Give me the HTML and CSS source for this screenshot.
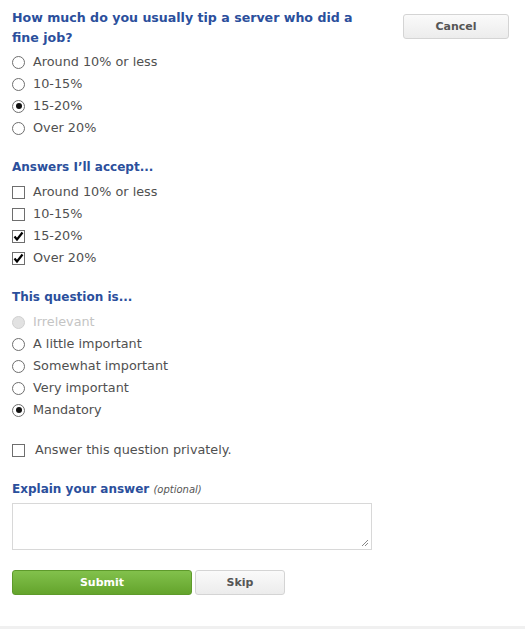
FILE: index.html
```html
<!DOCTYPE html>
<html>
<head>
<meta charset="utf-8">
<link rel="stylesheet" href="styles.css">
</head>
<body>
<div class="page">
  <div class="top">
    <h2 class="title">How much do you usually tip a server who did a fine job?</h2>
    <button class="btn btn-gray cancel">Cancel</button>
  </div>
  <ul class="opts first">
    <li><span class="radio"></span>Around 10% or less</li>
    <li><span class="radio"></span>10-15%</li>
    <li><span class="radio on"></span>15-20%</li>
    <li><span class="radio"></span>Over 20%</li>
  </ul>

  <h3 class="head">Answers I’ll accept...</h3>
  <ul class="opts">
    <li><span class="check"></span>Around 10% or less</li>
    <li><span class="check"></span>10-15%</li>
    <li><span class="check on"><svg viewBox="0 0 13 13" width="13" height="13"><path d="M2.5 6.5 L5 9.5 L10.5 2.5" fill="none" stroke="#000" stroke-width="2.2"/></svg></span>15-20%</li>
    <li><span class="check on"><svg viewBox="0 0 13 13" width="13" height="13"><path d="M2.5 6.5 L5 9.5 L10.5 2.5" fill="none" stroke="#000" stroke-width="2.2"/></svg></span>Over 20%</li>
  </ul>

  <h3 class="head">This question is...</h3>
  <ul class="opts">
    <li class="disabled"><span class="radio dis"></span>Irrelevant</li>
    <li><span class="radio"></span>A little important</li>
    <li><span class="radio"></span>Somewhat important</li>
    <li><span class="radio"></span>Very important</li>
    <li><span class="radio on"></span>Mandatory</li>
  </ul>

  <div class="private"><span class="check"></span>Answer this question privately.</div>

  <h3 class="head">Explain your answer <span class="optional">(optional)</span></h3>
  <div class="ta"><svg class="grip" width="8" height="8" viewBox="0 0 8 8"><path d="M7 1 L1 7 M7 4 L4 7" stroke="#888" stroke-width="1"/></svg></div>

  <div class="actions">
    <button class="btn btn-green submit">Submit</button>
    <button class="btn btn-gray skip">Skip</button>
  </div>
</div>
<div class="footer"></div>
</body>
</html>
```
FILE: styles.css
```css
* { box-sizing: border-box; }
html, body { margin: 0; padding: 0; background: #fff; }
body {
  font-family: "DejaVu Sans", Verdana, sans-serif;
  font-size: 12.8px;
  color: #505050;
  height: 629px;
  display: flex;
  flex-direction: column;
}
.page {
  padding: 8px 16px 0 12px;
  flex: 1;
}
.top {
  display: flex;
  justify-content: space-between;
  align-items: flex-start;
}
.title {
  margin: 0;
  width: 360px;
  font-size: 12.6px;
  line-height: 20px;
  font-weight: bold;
  color: #2b4f9c;
}
.btn {
  font-family: "DejaVu Sans", Verdana, sans-serif;
  font-size: 11px;
  font-weight: bold;
  height: 25px;
  border-radius: 3px;
  cursor: pointer;
  padding: 0;
}
.btn-gray {
  background: linear-gradient(#fafafa, #ececec);
  border: 1px solid #d4d4d4;
  color: #555;
}
.btn-green {
  background: linear-gradient(#82c14c, #64a42c);
  border: 1px solid #5e9a2b;
  color: #fff;
}
.cancel { width: 106px; margin-top: 6px; }
.opts {
  list-style: none;
  margin: 0;
  padding: 0;
}
.opts.first { margin-top: 3px; }
.opts li, .private {
  height: 22px;
  display: flex;
  align-items: center;
  line-height: 22px;
}
.disabled { color: #c4c4c4; }
.radio {
  width: 13px;
  height: 13px;
  border: 1px solid #6e6e6e;
  border-radius: 50%;
  background: #fff;
  margin-right: 8px;
  display: flex;
  align-items: center;
  justify-content: center;
  flex: none;
}
.radio.on::after {
  content: "";
  width: 6px;
  height: 6px;
  border-radius: 50%;
  background: #111;
}
.radio.dis {
  background: #e2e2e2;
  border-color: #d0d0d0;
}
.check {
  width: 13px;
  height: 13px;
  border: 1px solid #6e6e6e;
  background: #fff;
  margin-right: 8px;
  flex: none;
  position: relative;
}
.check svg {
  position: absolute;
  left: -1px;
  top: -1px;
}
.head {
  margin: 18px 0 4px;
  font-size: 12px;
  line-height: 20px;
  font-weight: bold;
  color: #2b4f9c;
}
.private { margin-top: 18px; }
.private .check { margin-right: 10px; }
.optional {
  font-weight: normal;
  font-style: italic;
  font-size: 10px;
  line-height: 10px;
  color: #555;
}
.ta {
  margin-top: 4px;
  width: 360px;
  height: 47px;
  border: 1px solid #d8d8d8;
  position: relative;
}
.grip {
  position: absolute;
  right: 2px;
  bottom: 2px;
}
.actions {
  margin-top: 20px;
  display: flex;
  gap: 3px;
}
.submit { width: 180px; }
.skip { width: 90px; }
.footer {
  height: 3px;
  background: #f0f0f0;
}
```
